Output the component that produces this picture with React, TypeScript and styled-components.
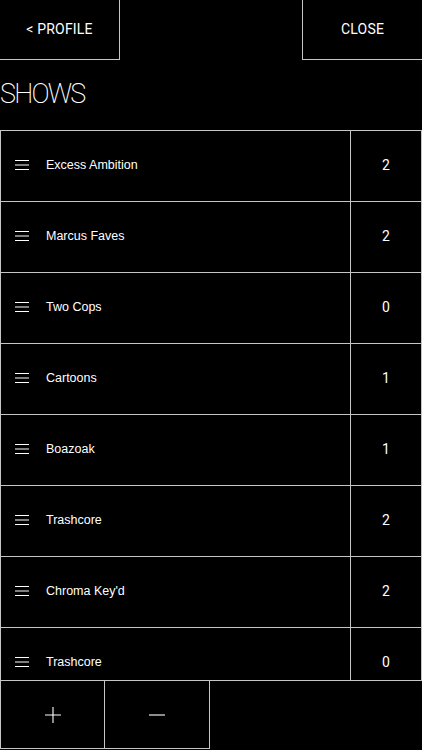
import styled, { createGlobalStyle } from "styled-components";

const shows = [
    { name: "Excess Ambition", count: 2 },
    { name: "Marcus Faves", count: 2 },
    { name: "Two Cops", count: 0 },
    { name: "Cartoons", count: 1 },
    { name: "Boazoak", count: 1 },
    { name: "Trashcore", count: 2 },
    { name: "Chroma Key'd", count: 2 },
    { name: "Trashcore", count: 0 },
];

const line = "#c6c6c6";

export default function App() {
    return (
        <>
            <GlobalStyle />
            <Screen>
                <TopBar>
                    <NavButton side="left">&lt; PROFILE</NavButton>
                    <NavButton side="right">CLOSE</NavButton>
                </TopBar>
                <Title>SHOWS</Title>
                <List>
                    {shows.map((show, i) => (
                        <Row key={i}>
                            <NameCell>
                                <svg width="14" height="12" viewBox="0 0 14 12">
                                    <path d="M0 1.5H14M0 6H14M0 10.5H14" stroke="#fff" strokeWidth="1.2" />
                                </svg>
                                <span>{show.name}</span>
                            </NameCell>
                            <CountCell>{show.count}</CountCell>
                        </Row>
                    ))}
                </List>
                <BottomBar>
                    <ToolButton>
                        <svg width="16" height="16" viewBox="0 0 16 16">
                            <path d="M8 0V16M0 8H16" stroke="#fff" strokeWidth="1.1" />
                        </svg>
                    </ToolButton>
                    <ToolButton>
                        <svg width="16" height="16" viewBox="0 0 16 16">
                            <path d="M0 8H16" stroke="#fff" strokeWidth="1.1" />
                        </svg>
                    </ToolButton>
                </BottomBar>
            </Screen>
        </>
    );
}

const GlobalStyle = createGlobalStyle`
    *{
        box-sizing: border-box;
        margin: 0;
        padding: 0;
    }
    body{
        background-color: #000;
        color: #fff;
        font-family: "Roboto", "Liberation Sans", sans-serif;
    }
`;

const Screen = styled.div`
    width: 422px;
    height: 750px;
    display: flex;
    flex-direction: column;
    background-color: #000;
    overflow: hidden;
`;

const TopBar = styled.div`
    height: 60px;
    display: flex;
    justify-content: space-between;
`;

const NavButton = styled.div<{ side: "left" | "right" }>`
    width: 120px;
    height: 60px;
    border-bottom: 1px solid ${line};
    ${(p) => (p.side === "left" ? `border-right: 1px solid ${line};` : `border-left: 1px solid ${line};`)}
    display: flex;
    justify-content: center;
    align-items: center;
    padding-bottom: 2px;
    font-size: 14px;
    font-weight: 400;
    letter-spacing: 0.2px;
    color: #fff;
`;

const Title = styled.h1`
    height: 70px;
    display: flex;
    align-items: center;
    padding-bottom: 3px;
    font-size: 27px;
    font-weight: 200;
    letter-spacing: -1.8px;
    color: #fff;
`;

const List = styled.div`
    flex: 1;
    overflow: hidden;
    border-top: 1px solid ${line};
`;

const Row = styled.div`
    height: 71px;
    display: grid;
    grid-template-columns: 1fr 72px;
    border-bottom: 1px solid ${line};
`;

const NameCell = styled.div`
    display: flex;
    align-items: center;
    padding-left: 14px;
    padding-bottom: 2px;
    border-left: 1px solid ${line};
    font-family: "Liberation Sans", sans-serif;
    font-size: 12.5px;

    svg{
        margin-right: 17px;
    }
`;

const CountCell = styled.div`
    display: flex;
    justify-content: center;
    align-items: center;
    padding-bottom: 2px;
    border-left: 1px solid ${line};
    border-right: 1px solid ${line};
    font-size: 14px;
`;

const BottomBar = styled.div`
    height: 70px;
    display: flex;
    border-top: 1px solid ${line};
`;

const ToolButton = styled.div`
    width: 105px;
    height: 68px;
    display: flex;
    justify-content: center;
    align-items: center;
    border-right: 1px solid ${line};
    border-bottom: 1px solid ${line};
    &:first-child{
        border-left: 1px solid ${line};
    }
`;
